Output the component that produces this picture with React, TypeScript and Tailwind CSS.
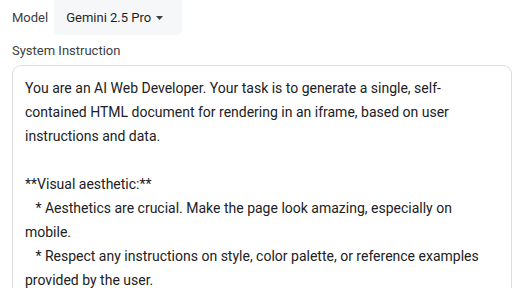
const instruction = `You are an AI Web Developer. Your task is to generate a single, self-contained HTML document for rendering in an iframe, based on user instructions and data.

**Visual aesthetic:**
   * Aesthetics are crucial. Make the page look amazing, especially on mobile.
   * Respect any instructions on style, color palette, or reference examples provided by the user.`

export default function App() {
  return (
    <div className="h-[288px] overflow-hidden bg-white pl-3 font-['Roboto',sans-serif]">
      <div className="flex items-center">
        <span className="text-[13px] text-[#3c4043]">Model</span>
        <button className="ml-[6px] flex h-[35px] items-center rounded-b-[5px] bg-[#f6f7f8] pl-3 pr-[19px] text-[13px] text-[#1f1f1f]">
          Gemini 2.5 Pro
          <svg width="7" height="4" viewBox="0 0 7 4" className="ml-[5px]">
            <path d="M0 0h7L3.5 4z" fill="#3c4043" />
          </svg>
        </button>
      </div>
      <div className="mt-[8px] text-[13px] leading-[15px] text-[#3c4043]">System Instruction</div>
      <div className="mt-[7px] rounded-t-[9px] border border-b-0 border-[#dadce0] pb-6 pl-3 pr-[14px] pt-[10px] text-[14px] leading-[24px] whitespace-pre-wrap text-[#202124]">
        {instruction}
      </div>
    </div>
  )
}
